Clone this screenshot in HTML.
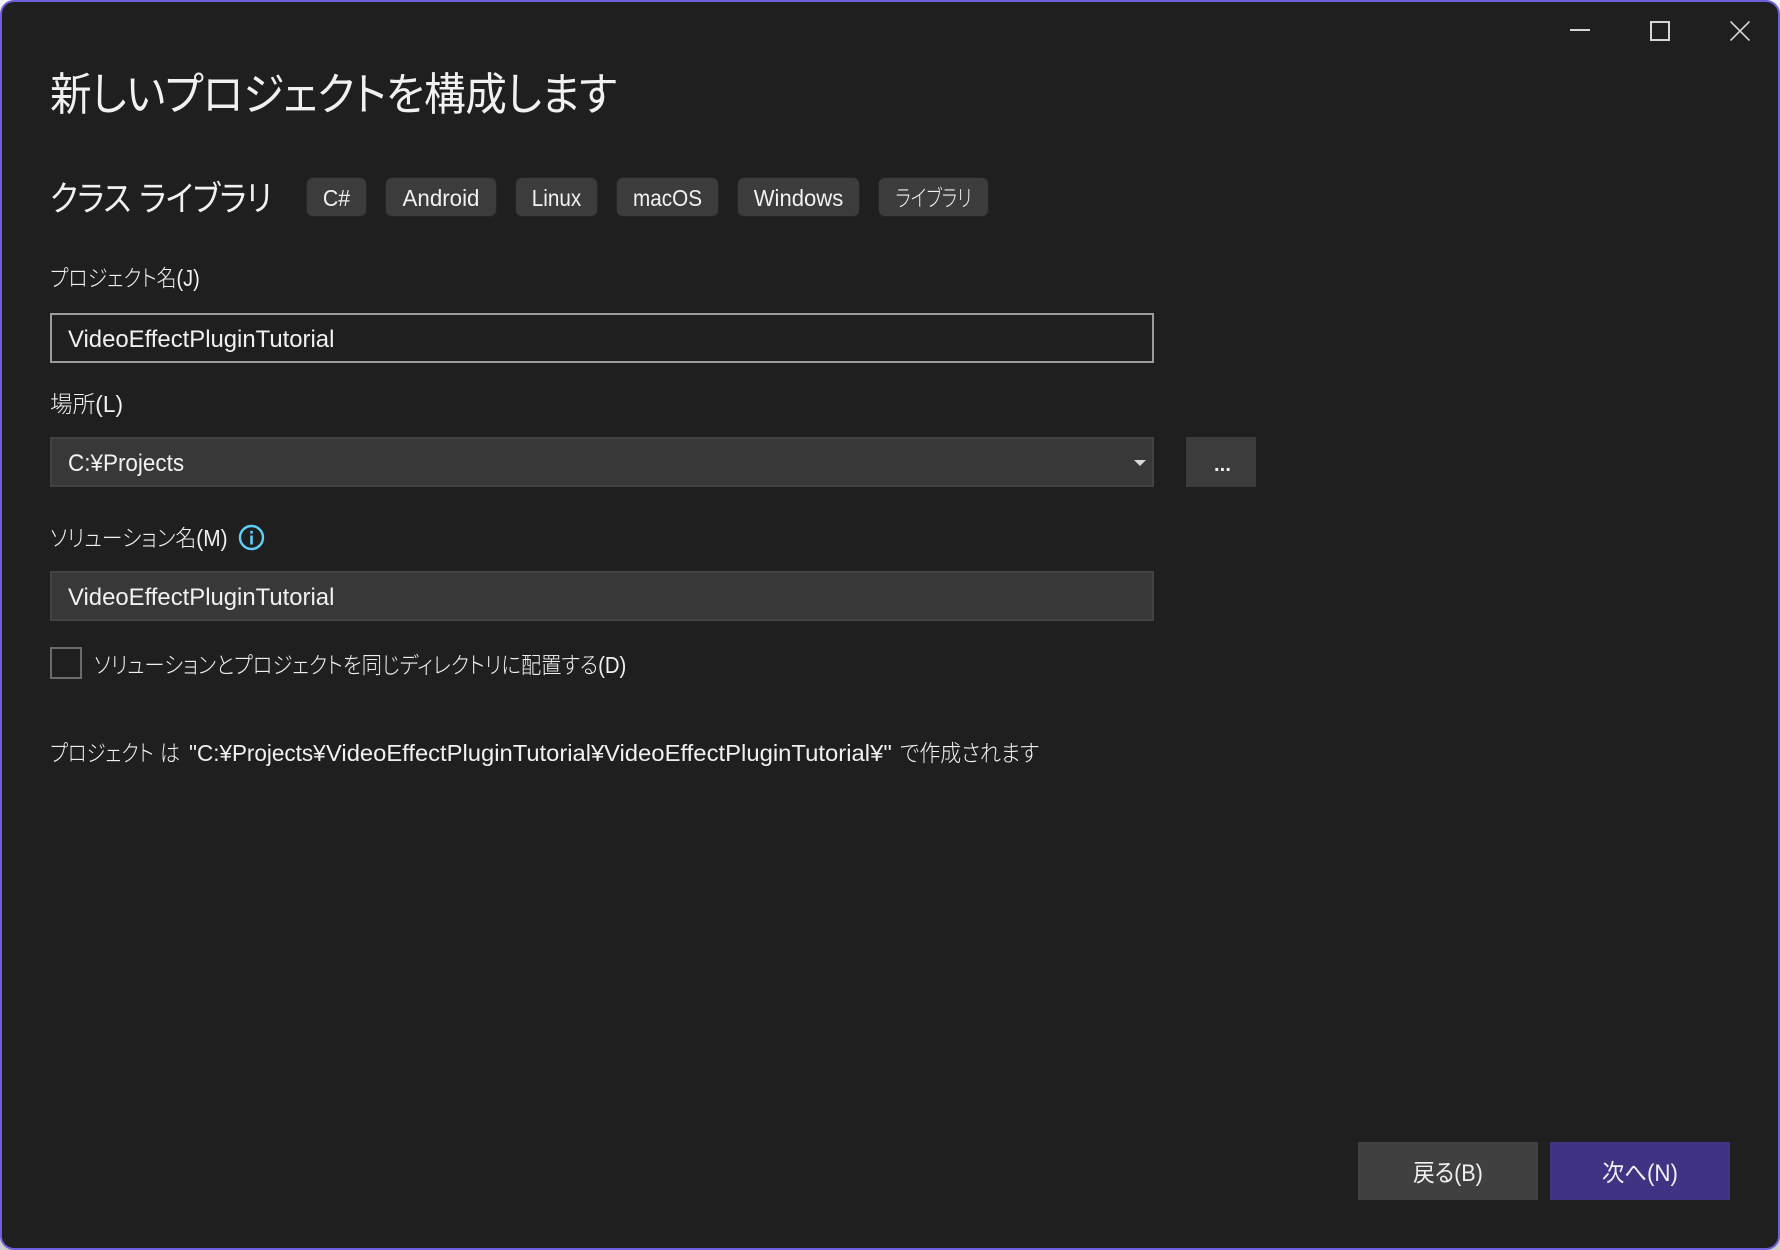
<!DOCTYPE html>
<html lang="ja"><head><meta charset="utf-8"><style>
html,body{margin:0;padding:0;width:1780px;height:1250px;overflow:hidden;background:linear-gradient(#f4f4f4 50%,#cfcfcf 50%)}
#w{position:absolute;left:0;top:0;width:1776px;height:1246px;border:2px solid #6d60dd;border-radius:14px;background:#1f1f1f;overflow:hidden}
.a{position:absolute;box-sizing:border-box}
.t{position:absolute;white-space:nowrap;color:#f1f1f1;font-family:"Liberation Sans","Noto Sans CJK JP",sans-serif;font-feature-settings:"palt";font-weight:400;transform-origin:0 50%;line-height:1}
.l{font-weight:300;font-size:23px;line-height:30px}
.tag{position:absolute;top:178px;height:38px;background:#3c3c3c;border-radius:6px;box-shadow:0 0 0 1px #262626}
.tl{position:absolute;white-space:nowrap;color:#f1f1f1;font-family:"Liberation Sans","Noto Sans CJK JP",sans-serif;font-feature-settings:"palt";font-size:23px;line-height:38px;top:179px;text-align:center}
#r{position:absolute;left:0;top:0;width:1780px;height:1250px}
</style></head><body>
<div id="w"></div>
<div id="r">
<div class="t" style="left:50px;top:70px;font-size:45px;line-height:50px;letter-spacing:-.4px;transform:scaleX(.925)">新しいプロジェクトを構成します</div>
<div class="t" style="left:50px;top:180px;font-size:35px;line-height:40px;letter-spacing:-.3px;transform:scaleX(.885)">クラス ライブラリ</div>

<div class="tag" style="left:307px;width:59px"></div><div class="tl" style="left:307px;width:59px;transform:scaleX(.93)">C#</div>
<div class="tag" style="left:386px;width:110px"></div><div class="tl" style="left:386px;width:110px;transform:scaleX(.97)">Android</div>
<div class="tag" style="left:516px;width:81px"></div><div class="tl" style="left:516px;width:81px;transform:scaleX(.9)">Linux</div>
<div class="tag" style="left:617px;width:101px"></div><div class="tl" style="left:617px;width:101px;transform:scaleX(.9)">macOS</div>
<div class="tag" style="left:738px;width:121px"></div><div class="tl" style="left:738px;width:121px;transform:scaleX(.96)">Windows</div>
<div class="tag" style="left:879px;width:109px"></div><div class="tl" style="left:879px;width:109px;transform:scaleX(.77);font-weight:300">ライブラリ</div>

<div class="t l" style="left:50px;top:263px;transform:scaleX(.865)">プロジェクト名(J)</div>
<div class="a" style="left:50px;top:313px;width:1104px;height:50px;border:2px solid #9b9b9b"></div>
<div class="t" style="left:68px;top:324px;font-size:24px;line-height:32px;transform:scaleX(.995)">VideoEffectPluginTutorial</div>

<div class="t l" style="left:50px;top:389px;transform:scaleX(.985)">場所(L)</div>
<div class="a" style="left:50px;top:437px;width:1104px;height:50px;border:2px solid #434343;background:#383838"></div>
<div class="t" style="left:68px;top:448px;font-size:24px;line-height:32px;transform:scaleX(.936)">C:¥Projects</div>
<svg class="a" style="left:1134px;top:460px" width="12" height="6"><path d="M0 0h12L6 6z" fill="#d8d8d8"/></svg>
<div class="a" style="left:1186px;top:437px;width:70px;height:50px;background:#3c3c3c"></div>
<div class="t" style="left:1214px;top:450px;font-size:20px;line-height:30px;font-weight:700;letter-spacing:.1px">...</div>

<div class="t l" style="left:50px;top:523px;transform:scaleX(.907)">ソリューション名(M)</div>
<svg class="a" style="left:238px;top:524px" width="27" height="27" viewBox="0 0 27 27"><circle cx="13.5" cy="13.5" r="11.5" fill="none" stroke="#5fcff8" stroke-width="2.4"/><rect x="12.2" y="11.5" width="2.6" height="9" fill="#5fcff8"/><rect x="12.2" y="6.8" width="2.6" height="2.8" fill="#5fcff8"/></svg>
<div class="a" style="left:50px;top:571px;width:1104px;height:50px;border:2px solid #434343;background:#383838"></div>
<div class="t" style="left:68px;top:582px;font-size:24px;line-height:32px;transform:scaleX(.995)">VideoEffectPluginTutorial</div>

<div class="a" style="left:50px;top:647px;width:32px;height:32px;border:2px solid #6b6b6b"></div>
<div class="t l" style="left:94px;top:650px;transform:scaleX(.883)">ソリューションとプロジェクトを同じディレクトリに配置する(D)</div>

<div class="t l" style="left:50px;top:738px;transform:scaleX(.84)">プロジェクト</div>
<div class="t l" style="left:160px;top:738px;transform:scaleX(.87)">は</div>
<div class="t l" style="left:188.5px;top:738px;transform:scaleX(.977)">"C:¥Projects¥</div>
<div class="t l" style="left:325.7px;top:738px;transform:scaleX(1.033)">VideoEffectPluginTutorial¥</div>
<div class="t l" style="left:604px;top:738px;transform:scaleX(1.037)">VideoEffectPluginTutorial¥"</div>
<div class="t l" style="left:900px;top:738px;transform:scaleX(.91)">で作成されます</div>

<div class="a" style="left:1358px;top:1142px;width:180px;height:58px;background:#404040"></div>
<div class="tl" style="left:1358px;top:1144px;width:180px;line-height:60px;font-size:24px;transform:scaleX(.9)">戻る(B)</div>
<div class="a" style="left:1550px;top:1142px;width:180px;height:58px;background:#413383"></div>
<div class="tl" style="left:1550px;top:1144px;width:180px;line-height:60px;font-size:24px;transform:scaleX(.93)">次へ(N)</div>

<div class="a" style="left:1570px;top:29px;width:20px;height:2px;background:#d6d6d6"></div>
<div class="a" style="left:1650px;top:21px;width:20px;height:20px;border:2px solid #d6d6d6"></div>
<svg class="a" style="left:1730px;top:21px" width="20" height="20"><path d="M.5.5l19 19M19.5.5l-19 19" stroke="#d6d6d6" stroke-width="1.6" fill="none"/></svg>
</div>
</body></html>
